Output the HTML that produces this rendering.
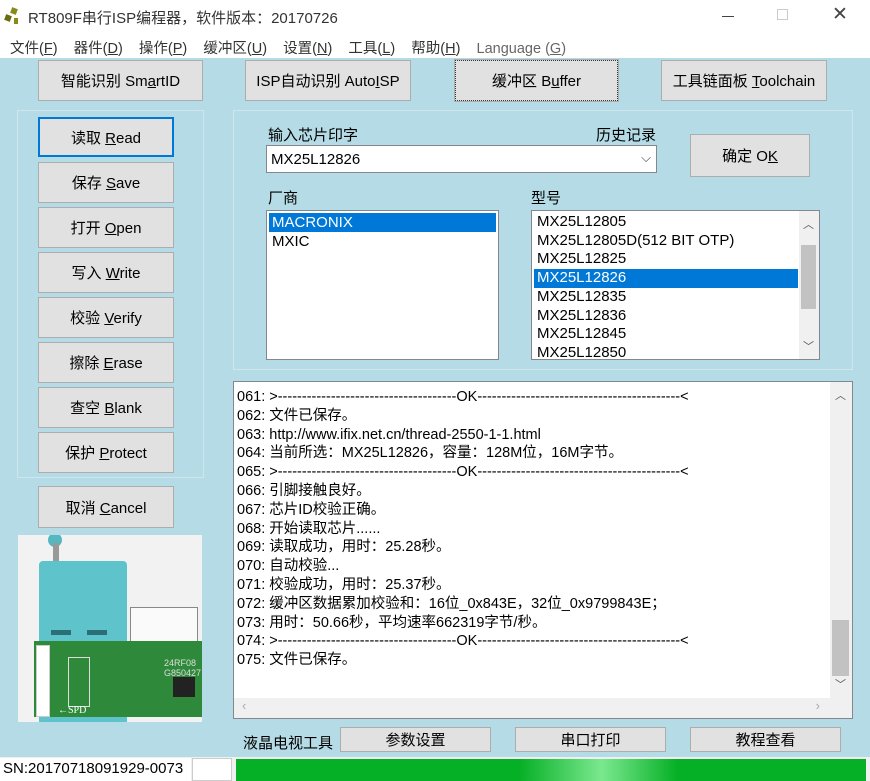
<!DOCTYPE html>
<html><head><meta charset="utf-8"><style>
*{margin:0;padding:0;box-sizing:border-box}
body{width:870px;height:781px;overflow:hidden;background:#b5dce6;font-family:"Liberation Sans","Noto Sans CJK SC",sans-serif;font-size:14px;color:#000;position:relative}
.a{position:absolute}
.btn{position:absolute;background:#e1e1e1;border:1px solid #adadad;display:flex;align-items:center;justify-content:center;font-size:15px;white-space:pre}
.grp{position:absolute;border:1px solid #cfe6ec}
.box{position:absolute;background:#fff;border:1px solid #828790}
.sel{background:#0078d7;color:#fff}
.log div{height:18.8px;line-height:18.8px;white-space:nowrap;font-size:14.5px}
</style></head><body>
<div class="a" style="left:0;top:0;width:870px;height:58px;background:#fff"></div>
<svg class="a" style="left:4px;top:7px" width="16" height="18"><rect x="7" y="1" width="6" height="6" fill="#8a8a1a" transform="rotate(20 10 4)"/><rect x="1" y="8" width="6" height="6" fill="#6b6b10" transform="rotate(20 4 11)"/><rect x="10" y="11" width="4" height="6" fill="#8a8a1a"/></svg>
<div class="a" style="left:28px;top:7px;font-size:15px;color:#333">RT809F串行ISP编程器，软件版本：20170726</div>
<div class="a" style="left:722px;top:16px;width:12px;height:1px;background:#444"></div>
<div class="a" style="left:777px;top:9px;width:11px;height:11px;border:1px solid #ccc"></div>
<div class="a" style="left:832px;top:3px;font-size:19px;color:#444">✕</div>
<div class="a" style="left:10px;top:37px;font-size:14.5px;color:#333;white-space:nowrap">文件(<u>F</u>)&nbsp;&nbsp;&nbsp;&nbsp;器件(<u>D</u>)&nbsp;&nbsp;&nbsp;&nbsp;操作(<u>P</u>)&nbsp;&nbsp;&nbsp;&nbsp;缓冲区(<u>U</u>)&nbsp;&nbsp;&nbsp;&nbsp;设置(<u>N</u>)&nbsp;&nbsp;&nbsp;&nbsp;工具(<u>L</u>)&nbsp;&nbsp;&nbsp;&nbsp;帮助(<u>H</u>)&nbsp;&nbsp;&nbsp;&nbsp;<span style="color:#666">Language (<u>G</u>)</span></div>

<div class="btn" style="left:38px;top:60px;width:165px;height:41px"><span>智能识别 Sm<u>a</u>rtID</span></div>
<div class="btn" style="left:245px;top:60px;width:166px;height:41px"><span>ISP自动识别 Auto<u>I</u>SP</span></div>
<div class="btn" style="left:455px;top:60px;width:163px;height:41px;border:1px dotted #333;outline:1px solid #adadad"><span>缓冲区 B<u>u</u>ffer</span></div>
<div class="btn" style="left:661px;top:60px;width:166px;height:41px"><span>工具链面板 <u>T</u>oolchain</span></div>

<div class="grp" style="left:17px;top:110px;width:187px;height:368px"></div>
<div class="btn" style="left:38px;top:117px;width:136px;height:40px;border:2px solid #0078d7"><span>读取 <u>R</u>ead</span></div>
<div class="btn" style="left:38px;top:162px;width:136px;height:41px"><span>保存 <u>S</u>ave</span></div>
<div class="btn" style="left:38px;top:207px;width:136px;height:41px"><span>打开 <u>O</u>pen</span></div>
<div class="btn" style="left:38px;top:252px;width:136px;height:41px"><span>写入 <u>W</u>rite</span></div>
<div class="btn" style="left:38px;top:297px;width:136px;height:41px"><span>校验 <u>V</u>erify</span></div>
<div class="btn" style="left:38px;top:342px;width:136px;height:41px"><span>擦除 <u>E</u>rase</span></div>
<div class="btn" style="left:38px;top:387px;width:136px;height:41px"><span>查空 <u>B</u>lank</span></div>
<div class="btn" style="left:38px;top:432px;width:136px;height:41px"><span>保护 <u>P</u>rotect</span></div>
<div class="btn" style="left:38px;top:486px;width:136px;height:42px"><span>取消 <u>C</u>ancel</span></div>

<div class="a" style="left:18px;top:535px;width:184px;height:187px;background:#f2f2f2;overflow:hidden">
<div class="a" style="left:30px;top:-2px;width:14px;height:14px;border-radius:50%;background:#55b8c0"></div>
<div class="a" style="left:35px;top:8px;width:6px;height:50px;background:#999"></div>
<div class="a" style="left:21px;top:26px;width:88px;height:165px;background:#5fc3cc;border-radius:4px"></div>
<div class="a" style="left:112px;top:72px;width:68px;height:60px;border:1px solid #888;background:#fafafa"></div>
<div class="a" style="left:33px;top:95px;width:20px;height:40px;background:repeating-linear-gradient(#2a6e76 0 5px,#5fc3cc 5px 12px)"></div>
<div class="a" style="left:69px;top:95px;width:20px;height:40px;background:repeating-linear-gradient(#2a6e76 0 5px,#5fc3cc 5px 12px)"></div>
<div class="a" style="left:16px;top:106px;width:168px;height:76px;background:#2e8a3a"></div>
<div class="a" style="left:18px;top:110px;width:14px;height:72px;background:#fff;border:1px solid #ccc"></div>
<div class="a" style="left:50px;top:122px;width:22px;height:50px;border:1px solid #ddd"></div>
<div class="a" style="left:155px;top:142px;width:22px;height:20px;background:#222"></div>
<div class="a" style="left:146px;top:123px;font-size:9px;color:#ddd;line-height:10px">24RF08<br>G850427</div>
<div class="a" style="left:40px;top:170px;font-size:10px;color:#fff;font-family:'Liberation Serif',serif">←SPD</div>
</div>

<div class="grp" style="left:233px;top:110px;width:620px;height:260px"></div>
<div class="a" style="left:268px;top:124px;font-size:15px">输入芯片印字</div>
<div class="a" style="left:596px;top:124px;font-size:15px">历史记录</div>
<div class="box" style="left:266px;top:145px;width:391px;height:28px;padding:5px 4px;font-size:15px">MX25L12826<span class="a" style="right:5px;top:4px;font-size:13px;color:#444">⌵</span></div>
<div class="btn" style="left:690px;top:134px;width:120px;height:43px"><span>确定 O<u>K</u></span></div>
<div class="a" style="left:268px;top:187px;font-size:15px">厂商</div>
<div class="a" style="left:531px;top:187px;font-size:15px">型号</div>
<div class="box" style="left:266px;top:210px;width:233px;height:150px;padding:2px;font-size:15px;line-height:19px">
<div class="sel" style="padding-left:3px">MACRONIX</div><div style="padding-left:3px">MXIC</div></div>
<div class="box" style="left:531px;top:210px;width:289px;height:150px;padding:2px;font-size:15px;line-height:18.7px;overflow:hidden">
<div style="padding-left:3px">MX25L12805</div><div style="padding-left:3px">MX25L12805D(512 BIT OTP)</div><div style="padding-left:3px">MX25L12825</div><div class="sel" style="padding-left:3px;width:264px">MX25L12826</div><div style="padding-left:3px">MX25L12835</div><div style="padding-left:3px">MX25L12836</div><div style="padding-left:3px">MX25L12845</div><div style="padding-left:3px">MX25L12850</div>
<div class="a" style="right:0;top:0;width:20px;height:148px;background:#f0f0f0"></div>
<div class="a" style="right:3px;top:34px;width:15px;height:64px;background:#c2c2c2"></div>
<div class="a" style="right:5px;top:5px;font-size:11px;color:#555">︿</div>
<div class="a" style="right:5px;top:127px;font-size:11px;color:#555">﹀</div>
</div>

<div class="box log" style="left:233px;top:381px;width:620px;height:338px;padding:6px 0 0 3px;overflow:hidden">
<div>061: &gt;-------------------------------------OK------------------------------------------&lt;</div>
<div>062: 文件已保存。</div>
<div>063: http://www.ifix.net.cn/thread-2550-1-1.html</div>
<div>064: 当前所选：MX25L12826，容量：128M位，16M字节。</div>
<div>065: &gt;-------------------------------------OK------------------------------------------&lt;</div>
<div>066: 引脚接触良好。</div>
<div>067: 芯片ID校验正确。</div>
<div>068: 开始读取芯片......</div>
<div>069: 读取成功，用时：25.28秒。</div>
<div>070: 自动校验...</div>
<div>071: 校验成功，用时：25.37秒。</div>
<div>072: 缓冲区数据累加校验和：16位_0x843E，32位_0x9799843E；</div>
<div>073: 用时：50.66秒，平均速率662319字节/秒。</div>
<div>074: &gt;-------------------------------------OK------------------------------------------&lt;</div>
<div>075: 文件已保存。</div>
<div class="a" style="right:0;top:0;width:22px;height:316px;background:#f0f0f0"></div>
<div class="a" style="right:3px;top:238px;width:17px;height:56px;background:#c2c2c2"></div>
<div class="a" style="right:6px;top:5px;font-size:11px;color:#555">︿</div>
<div class="a" style="right:6px;top:294px;font-size:11px;color:#555">﹀</div>
<div class="a" style="left:0;bottom:0;width:620px;height:20px;background:#f0f0f0"></div>
<div class="a" style="left:8px;bottom:2px;font-size:13px;color:#aaa">‹</div>
<div class="a" style="right:32px;bottom:2px;font-size:13px;color:#aaa">›</div>
</div>

<div class="a" style="left:243px;top:732px;font-size:15px">液晶电视工具</div>
<div class="btn" style="left:340px;top:727px;width:151px;height:25px">参数设置</div>
<div class="btn" style="left:515px;top:727px;width:151px;height:25px">串口打印</div>
<div class="btn" style="left:690px;top:727px;width:151px;height:25px">教程查看</div>

<div class="a" style="left:0;top:757px;width:870px;height:24px;background:#f0f0f0"></div>
<div class="a" style="left:0;top:758px;width:191px;height:23px;background:#fff;font-size:15px;padding:2px 0 0 3px;white-space:nowrap;overflow:hidden">SN:20170718091929-0073</div>
<div class="a" style="left:192px;top:758px;width:40px;height:23px;background:#fff;border:1px solid #ccc"></div>
<div class="a" style="left:236px;top:759px;width:630px;height:22px;background:linear-gradient(90deg,#06b026 0%,#06b026 45%,#7be88f 58%,#06b026 70%,#06b026 100%)"></div>
</body></html>
